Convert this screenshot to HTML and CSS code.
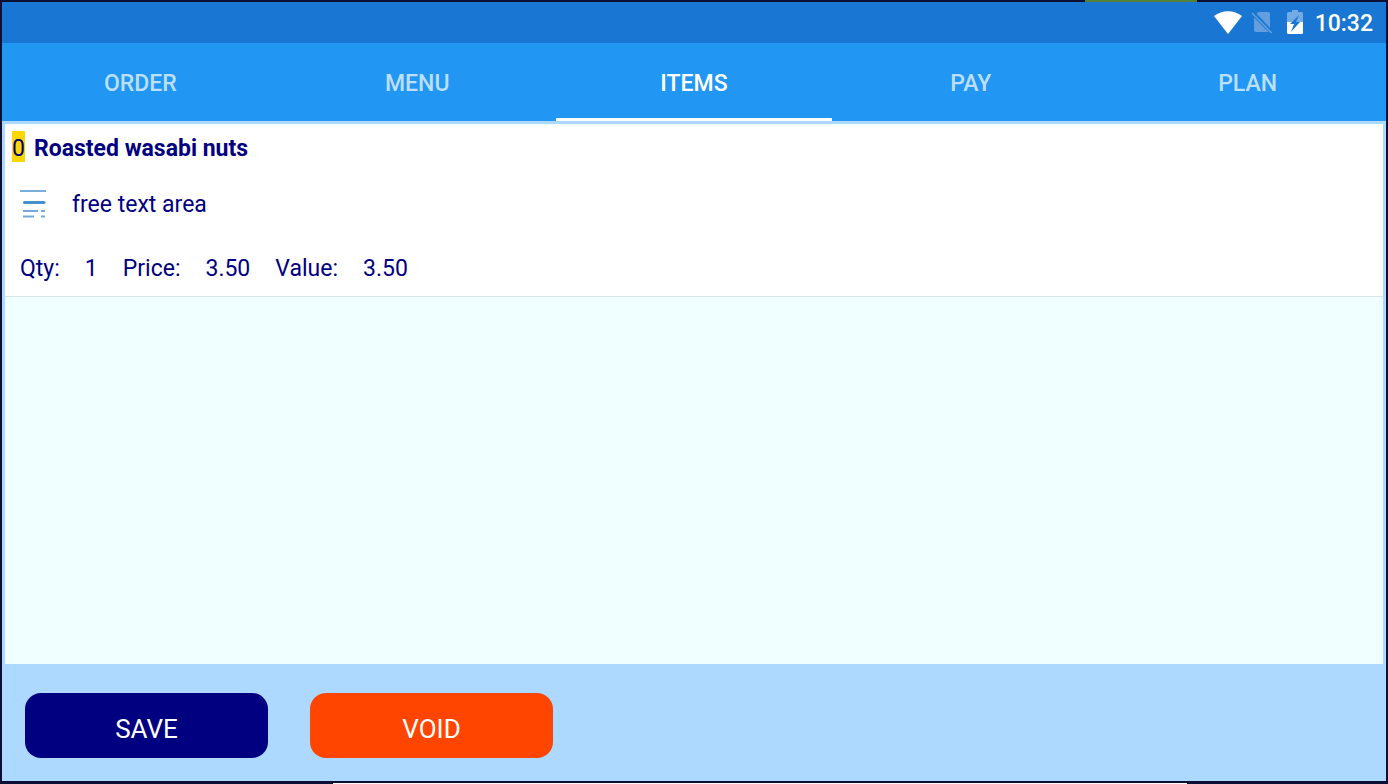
FILE: index.html
```html
<!DOCTYPE html>
<html lang="en">
<head>
    <meta charset="UTF-8">
    <meta name="viewport" content="width=device-width, initial-scale=1.0">
    <title>Items</title>
    <link rel="stylesheet" href="styles.css">
</head>
<body>
    <div class="window-edge"></div>
    <div class="app">
        <header class="status-bar">
            <svg class="wifi" width="28" height="24" viewBox="0 0 28 24">
                <path d="M0 5C8-1.500 20-1.500 28 5L14 23Z" fill="#fff"/>
            </svg>
            <svg class="no-sim" width="22" height="24" viewBox="0 0 22 24">
                <path d="M8 1H17Q19 1 19 3V17L5.500 2.500Z" fill="#639fe0"/>
                <path d="M3 6.500L17.500 21H5Q3 21 3 19Z" fill="#639fe0"/>
                <path d="M1 2L20.500 22" stroke="#639fe0" stroke-width="1.600"/>
            </svg>
            <svg class="battery" width="16" height="26" viewBox="0 0 16 26">
                <path d="M5 0H11V2H14.500Q16 2 16 3.500V12H0V3.500Q0 2 1.500 2H5Z" fill="#75abe4"/>
                <path d="M0 12H16V22.500Q16 24 14.500 24H1.500Q0 24 0 22.500Z" fill="#fff"/>
                <path d="M12 5L3 14H7L4 22L13 12H9Z" fill="#1976d2"/>
            </svg>
            <span class="clock">10:32</span>
        </header>

        <nav class="tabs">
            <a class="tab" href="#order">ORDER</a>
            <a class="tab" href="#menu">MENU</a>
            <a class="tab active" href="#items">ITEMS</a>
            <a class="tab" href="#pay">PAY</a>
            <a class="tab" href="#plan">PLAN</a>
        </nav>

        <main class="item-list">
            <div class="item">
                <div class="item-title">
                    <span class="badge">0</span>
                    <strong>Roasted wasabi nuts</strong>
                </div>
                <div class="item-note">
                    <svg width="28" height="30" viewBox="0 0 28 30">
                        <path d="M0 1H26" stroke="#79addb" stroke-width="2"/>
                        <path d="M4.500 12.500H24" stroke="#4b8fcd" stroke-width="3" stroke-linecap="round"/>
                        <path d="M3 21H18M21 21H25M3 26.500H14M21 26.500H25" stroke="#76a9d9" stroke-width="2"/>
                    </svg>
                    <span>free text area</span>
                </div>
                <div class="item-values">
                    <span>Qty:</span>
                    <span>1</span>
                    <span>Price:</span>
                    <span>3.50</span>
                    <span>Value:</span>
                    <span>3.50</span>
                </div>
            </div>
        </main>

        <footer class="actions">
            <button class="btn save" type="button">SAVE</button>
            <button class="btn void" type="button">VOID</button>
        </footer>
    </div>
    <div class="desktop-edge"></div>
</body>
</html>
```
FILE: styles.css
```css
* {
    box-sizing: border-box;
}
body {
    margin: 0;
    min-height: 100vh;
    display: flex;
    flex-direction: column;
    background: #0b0f33;
    font-family: Roboto, sans-serif;
    font-size: 23px;
    line-height: 28px;
    color: #000080;
}
.window-edge {
    height: 2px;
    width: 112px;
    margin-left: auto;
    margin-right: 191px;
    background: #55803a;
}
.app {
    flex: 1;
    display: flex;
    flex-direction: column;
    margin: 0 2px 2px;
    background: #add8ff;
}
.desktop-edge {
    height: 1px;
    margin: 0 201px 0 333px;
    background: #fff;
}

/* status bar */
.status-bar {
    display: flex;
    align-items: center;
    justify-content: flex-end;
    height: 41px;
    padding-right: 13px;
    background: #1976d2;
    color: #fff;
}
.no-sim {
    margin-left: 9px;
}
.battery {
    margin-left: 14px;
}
.clock {
    margin-left: 12px;
    padding-top: 2px;
    font-weight: 500;
}

/* tabs */
.tabs {
    display: flex;
    height: 78px;
    background: #2196f3;
}
.tab {
    flex: 1;
    display: flex;
    align-items: center;
    justify-content: center;
    padding-top: 4px;
    border-top: 3px solid transparent;
    border-bottom: 3px solid transparent;
    color: #bcdffb;
    font-weight: 500;
    text-decoration: none;
}
.tab.active {
    color: #fff;
    border-bottom-color: #fff;
}

/* items */
.item-list {
    flex: 1;
    margin: 3px 3px 0;
    background: #f0ffff;
}
.item {
    padding: 10px 7px 13px;
    background: #fff;
    border-top: 1px solid #f0ffff;
    border-bottom: 1px solid #d5e6e8;
}
.item-title {
    display: flex;
    gap: 9px;
}
.badge {
    height: 31px;
    margin-top: -4px;
    padding-top: 4px;
    background: #ffd700;
}
.item-note {
    display: flex;
    align-items: center;
    gap: 24px;
    margin-top: 27px;
    padding-left: 8px;
}
.item-values {
    display: flex;
    gap: 25px;
    margin-top: 35px;
    padding-left: 8px;
}

/* buttons */
.actions {
    display: flex;
    gap: 42px;
    padding: 29px 23px 23px;
}
.btn {
    width: 243px;
    height: 65px;
    padding: 6px 0 0;
    border: none;
    border-radius: 16px;
    color: #fff;
    font-family: inherit;
    font-size: 26px;
    cursor: pointer;
}
.save {
    background: #000080;
}
.void {
    background: #ff4500;
}
```
